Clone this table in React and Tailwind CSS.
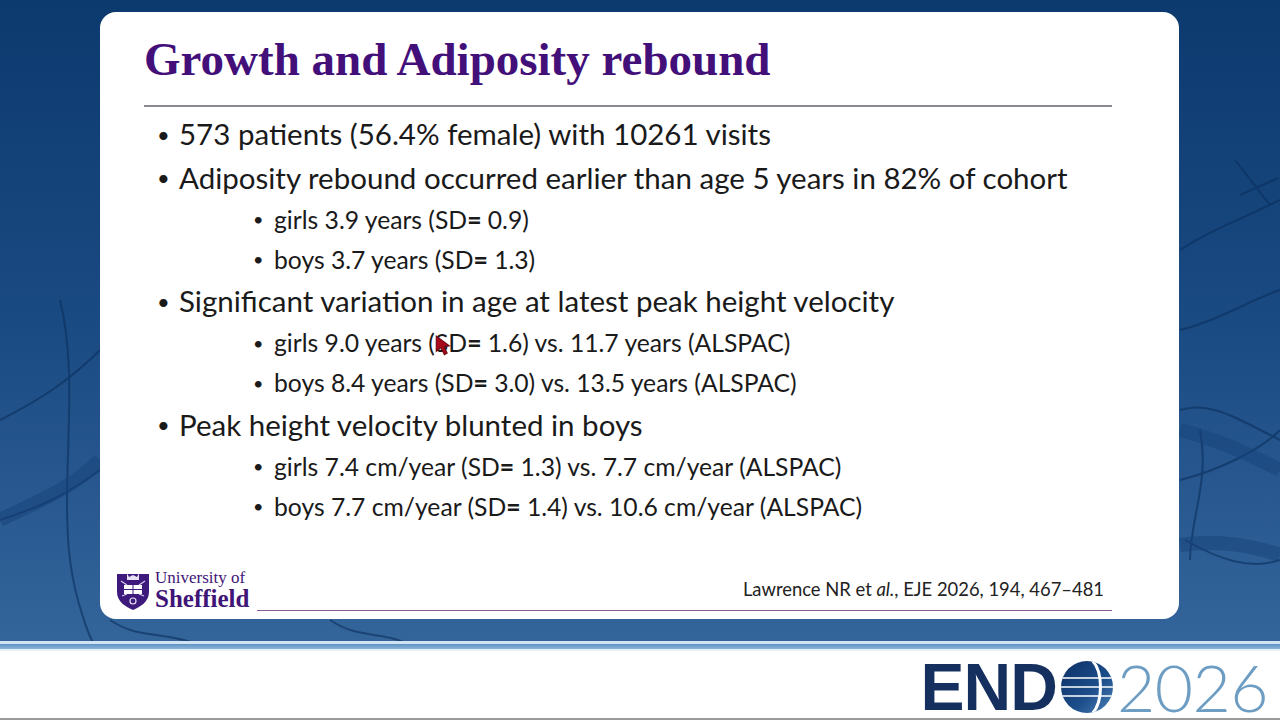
import React from "react";

const body = { fontFamily: "Lato, 'Noto Sans', sans-serif" };
const serif = { fontFamily: "'Liberation Serif', 'Times New Roman', serif" };

function SD({ v }) {
  return (
    <>
      (SD<span className="font-black">=</span> {v})
    </>
  );
}

function L1({ children }) {
  return (
    <div className="flex items-center h-[43.5px] text-[29.5px] text-[#1a1a1a]">
      <span className="w-[35px] pl-[13px] text-[22px]">•</span>
      <span>{children}</span>
    </div>
  );
}
function L2({ children }) {
  return (
    <div className="flex items-center h-[40px] text-[24.7px] text-[#1a1a1a] pl-[96px]">
      <span className="w-[34px] pl-[13px] text-[18px]">•</span>
      <span>{children}</span>
    </div>
  );
}

function Shield() {
  return (
    <svg width="34" height="40" viewBox="0 0 34 40">
      <path d="M1 4 L33 4 L33 22 C33 32 24 37 17 40 C10 37 1 32 1 22 Z" fill="#3d1a7c" />
      <path d="M11 3 L13 7 L17 5 L21 7 L23 3 L23 10 L11 10 Z" fill="#e8e0f5" />
      <rect x="8" y="15" width="18" height="9" fill="#ffffff" />
      <path d="M17 15 V24 M8 19.5 H26" stroke="#3d1a7c" strokeWidth="1" />
      <path d="M5 11 L11 15 M29 11 L23 15 M6 26 L11 24 M28 26 L23 24" stroke="#d8ccee" strokeWidth="1.2" />
      <circle cx="17" cy="31" r="3" fill="none" stroke="#e8e0f5" strokeWidth="1.2" />
    </svg>
  );
}

function Globe() {
  return (
    <svg width="54" height="54" viewBox="0 0 54 54">
      <defs>
        <linearGradient id="g1" x1="0" y1="0" x2="1" y2="1">
          <stop offset="0" stopColor="#0d2e63" />
          <stop offset="0.6" stopColor="#1c4f8c" />
          <stop offset="1" stopColor="#4f83b8" />
        </linearGradient>
        <clipPath id="c1"><circle cx="27" cy="27" r="26" /></clipPath>
      </defs>
      <circle cx="27" cy="27" r="26" fill="url(#g1)" />
      <g clipPath="url(#c1)" stroke="#ffffff">
        <path d="M0 18 H54 M0 27 H54 M0 36 H54" strokeWidth="1.6" />
        <path d="M30 -2 C44 10 44 44 30 56" fill="none" strokeWidth="3" />
      </g>
    </svg>
  );
}

function Cursor() {
  return (
    <svg width="20" height="24" viewBox="0 0 18 22">
      <path d="M1 1 L1 15 L5 11.5 L8.5 18 L11 16.5 L7.8 10.5 L13 10 Z" fill="#a80c1c" stroke="#6e0812" strokeWidth="1" />
    </svg>
  );
}

function Veins() {
  return (
    <svg className="absolute inset-0" width="1280" height="641" viewBox="0 0 1280 641">
      <g fill="none" stroke="#0b2f5e" strokeWidth="2" opacity="0.6">
        <path d="M0 420 C40 400 70 380 100 350" />
        <path d="M60 300 C80 380 60 480 70 560 C75 600 90 640 95 645" />
        <path d="M0 520 C30 510 60 500 100 470" />
        <path d="M110 620 C140 640 160 630 200 645" />
        <path d="M330 620 C360 640 380 630 410 645" />
        <path d="M1180 250 C1210 230 1240 220 1280 200" />
        <path d="M1180 330 C1220 320 1250 300 1280 290" />
        <path d="M1180 410 C1210 400 1240 420 1280 440" />
        <path d="M1200 430 C1210 480 1190 520 1190 560" />
        <path d="M1180 480 C1220 470 1260 450 1280 430" />
        <path d="M1185 540 C1220 560 1250 570 1280 560" />
        <path d="M1235 160 L1270 205 M1240 195 L1278 178" />
      </g>
      <g fill="none" stroke="#15427a" strokeWidth="14" opacity="0.5">
        <path d="M1180 430 C1220 440 1250 455 1280 470" />
        <path d="M1180 545 C1220 540 1250 545 1280 555" />
        <path d="M0 520 C40 500 70 490 100 460" />
      </g>
    </svg>
  );
}

export default function App() {
  return (
    <div className="w-[1280px] h-[720px] overflow-hidden relative bg-white" style={body}>
      <div className="relative h-[641px] bg-gradient-to-b from-[#0c3a6f] via-[#1a4a82] to-[#33649a] pt-[12px] pl-[100px]">
        <Veins />
        <div className="relative w-[1079px] h-[607px] bg-white rounded-[16px] flex flex-col pl-[44px] pr-[67px] pt-[24px]">
          <h1 className="h-[47px] text-[47px] leading-none font-bold text-[#43107a]" style={serif}>
            Growth and Adiposity rebound
          </h1>
          <div className="mt-[22px] h-[2px] bg-[#8c8a90]" />
          <div className="pt-[5.5px] flex flex-col">
            <L1>573 patients (56.4% female) with 10261 visits</L1>
            <L1>Adiposity rebound occurred earlier than age 5 years in 82% of cohort</L1>
            <L2>girls 3.9 years <SD v="0.9" /></L2>
            <L2>boys 3.7 years <SD v="1.3" /></L2>
            <L1>Significant variation in age at latest peak height velocity</L1>
            <L2>girls 9.0 years <SD v="1.6" /> vs. 11.7 years (ALSPAC)</L2>
            <L2>boys 8.4 years <SD v="3.0" /> vs. 13.5 years (ALSPAC)</L2>
            <L1>Peak height velocity blunted in boys</L1>
            <L2>girls 7.4 cm/year <SD v="1.3" /> vs. 7.7 cm/year (ALSPAC)</L2>
            <L2>boys 7.7 cm/year <SD v="1.4" /> vs. 10.6 cm/year (ALSPAC)</L2>
          </div>
          <div className="mt-auto mb-[8px] -ml-[28px] flex items-end">
            <div className="flex items-center gap-[5px]">
              <Shield />
              <div className="flex flex-col text-[#3f1577] leading-none" style={serif}>
                <span className="text-[17px]">University of</span>
                <span className="text-[25px] font-bold">Sheffield</span>
              </div>
            </div>
            <div className="flex-1 ml-[8px] flex flex-col">
              <div className="text-right text-[18.4px] text-[#222] pr-[8px] pb-[6px]">
                Lawrence NR et <i>al.</i>, EJE 2026, 194, 467–481
              </div>
              <div className="h-[1.5px] bg-[#8a5a9a]" />
            </div>
          </div>
          <div className="absolute left-[335px] top-[323px]"><Cursor /></div>
        </div>
      </div>
      <div className="h-[3px] bg-[#cfe3f2]" />
      <div className="h-[5px] bg-gradient-to-b from-[#5f93c4] to-[#8ab3d8]" />
      <div className="h-[2px] bg-[#e6f1fa]" />
      <div className="h-[67px] flex items-center justify-end pr-[12px] pt-[4px]">
        <div className="flex items-center">
          <span className="block h-[50px] leading-[50px] text-[66px] font-bold text-[#15305f] tracking-[-1px]" style={{ fontFamily: "'Liberation Sans', Arial, sans-serif" }}>END</span>
          <div className="mx-[3px]"><Globe /></div>
          <span className="block h-[50px] leading-[50px] text-[66px] text-[#6e9dc3] tracking-[-0.5px]" style={{ fontFamily: "Lato, sans-serif", fontWeight: 300 }}>2026</span>
        </div>
      </div>
      <div className="h-[2px] bg-[#9a9a9a]" />
    </div>
  );
}
